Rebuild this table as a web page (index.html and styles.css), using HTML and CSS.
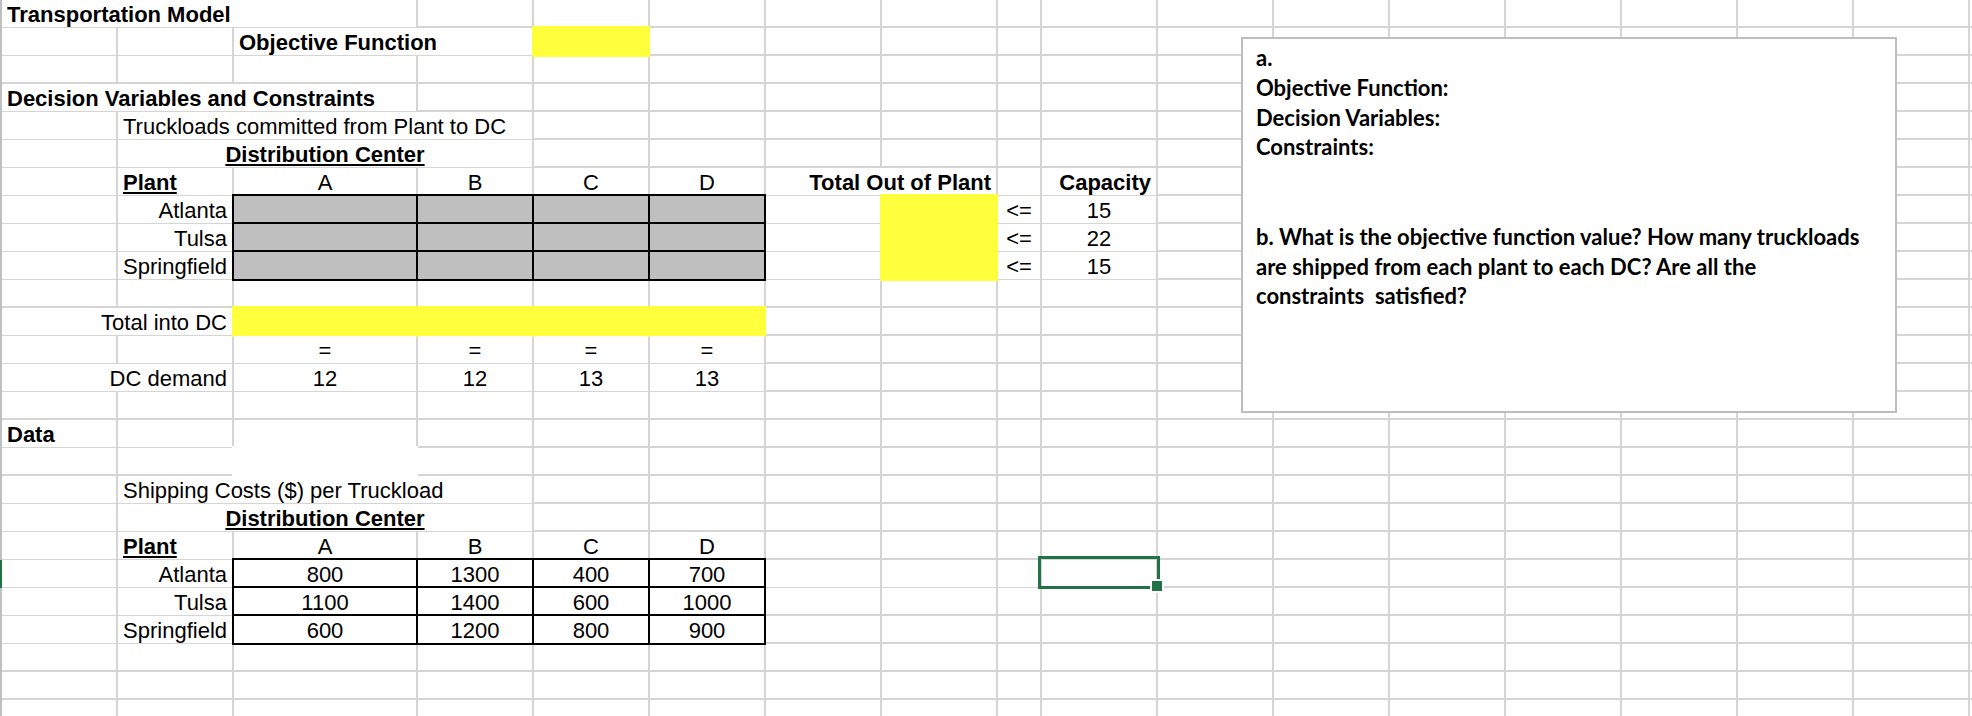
FILE: index.html
```html
<!DOCTYPE html>
<html lang="en">
<head>
<meta charset="utf-8">
<title>Transportation Model</title>
<link rel="stylesheet" href="styles.css">
</head>
<body>
<div class="sheet">
  <div class="row"><span class="s3 b">Transportation Model</span></div>
  <div class="row"><span></span><span></span><span class="s2 b">Objective Function</span><span class="yel"></span></div>
  <div class="row"></div>
  <div class="row"><span class="s3 b">Decision Variables and Constraints</span></div>
  <div class="row"><span></span><span class="s3">Truckloads committed from Plant to DC</span></div>
  <div class="row"><span></span><span class="s3 b c"><u>Distribution Center</u></span></div>
  <div class="row"><span></span><span class="b"><u>Plant</u></span><span class="c">A</span><span class="c">B</span><span class="c">C</span><span class="c">D</span><span class="s2 b r">Total Out of Plant</span><span></span><span class="b r">Capacity</span></div>
  <div class="row"><span></span><span class="r">Atlanta</span><span class="gry"></span><span class="gry"></span><span class="gry"></span><span class="gry"></span><span></span><span class="yel"></span><span class="c">&lt;=</span><span class="c">15</span></div>
  <div class="row"><span></span><span class="r">Tulsa</span><span class="gry"></span><span class="gry"></span><span class="gry"></span><span class="gry"></span><span></span><span class="yel"></span><span class="c">&lt;=</span><span class="c">22</span></div>
  <div class="row"><span></span><span class="r">Springfield</span><span class="gry"></span><span class="gry"></span><span class="gry"></span><span class="gry"></span><span></span><span class="yel"></span><span class="c">&lt;=</span><span class="c">15</span></div>
  <div class="row"></div>
  <div class="row"><span class="s2 r">Total into DC</span><span class="s4 yel"></span></div>
  <div class="row"><span></span><span></span><span class="c">=</span><span class="c">=</span><span class="c">=</span><span class="c">=</span></div>
  <div class="row"><span class="s2 r">DC demand</span><span class="c">12</span><span class="c">12</span><span class="c">13</span><span class="c">13</span></div>
  <div class="row"></div>
  <div class="row"><span class="b">Data</span><span></span><span class="nb"></span></div>
  <div class="row"><span></span><span></span><span class="blank"></span></div>
  <div class="row"><span></span><span class="s3">Shipping Costs ($) per Truckload</span></div>
  <div class="row"><span></span><span class="s3 b c"><u>Distribution Center</u></span></div>
  <div class="row"><span></span><span class="b"><u>Plant</u></span><span class="c">A</span><span class="c">B</span><span class="c">C</span><span class="c">D</span></div>
  <div class="row cur"><span></span><span class="r">Atlanta</span><span class="blk c">800</span><span class="blk c">1300</span><span class="blk c">400</span><span class="blk c">700</span><span></span><span></span><span></span><span class="sel"></span></div>
  <div class="row"><span></span><span class="r">Tulsa</span><span class="blk c">1100</span><span class="blk c">1400</span><span class="blk c">600</span><span class="blk c">1000</span></div>
  <div class="row"><span></span><span class="r">Springfield</span><span class="blk c">600</span><span class="blk c">1200</span><span class="blk c">800</span><span class="blk c">900</span></div>
  <div class="row"></div>
  <div class="row"></div>
  <div class="row"></div>

  <div class="note">
    <p>a.</p>
    <p>Objective Function:</p>
    <p>Decision Variables:</p>
    <p>Constraints:</p>
    <p class="q">b. What is the objective function value? How many truckloads<br>are shipped from each plant to each DC? Are all the<br>constraints&nbsp; satisfied?</p>
  </div>
</div>
</body>
</html>
```

FILE: styles.css
```css
* {
  box-sizing: border-box;
}

html,
body {
  margin: 0;
  padding: 0;
  background: #ffffff;
}

body {
  width: 1972px;
  height: 716px;
  overflow: hidden;
  font-family: "Liberation Sans", Arial, sans-serif;
  font-size: 22px;
  color: #000000;
}

.sheet {
  position: relative;
  width: 1972px;
  height: 716px;
  overflow: hidden;
}

.row {
  display: grid;
  grid-template-columns: 116px 116px 184px 116px 116px 116px 116px 116px 44px 116px 116px 116px 116px 116px 116px 116px 116px 1fr;
  height: 28px;
  border-left: 2px solid #bfbfbf;
  background:
    linear-gradient(#d5d5d5, #d5d5d5) 0 26px / 100% 2px no-repeat,
    linear-gradient(#d5d5d5, #d5d5d5) 114px 0 / 2px 100% no-repeat,
    linear-gradient(#d5d5d5, #d5d5d5) 230px 0 / 2px 100% no-repeat,
    linear-gradient(#d5d5d5, #d5d5d5) 414px 0 / 2px 100% no-repeat,
    linear-gradient(#d5d5d5, #d5d5d5) 530px 0 / 2px 100% no-repeat,
    linear-gradient(#d5d5d5, #d5d5d5) 646px 0 / 2px 100% no-repeat,
    linear-gradient(#d5d5d5, #d5d5d5) 762px 0 / 2px 100% no-repeat,
    linear-gradient(#d5d5d5, #d5d5d5) 878px 0 / 2px 100% no-repeat,
    linear-gradient(#d5d5d5, #d5d5d5) 994px 0 / 2px 100% no-repeat,
    linear-gradient(#d5d5d5, #d5d5d5) 1038px 0 / 2px 100% no-repeat,
    linear-gradient(#d5d5d5, #d5d5d5) 1154px 0 / 2px 100% no-repeat,
    linear-gradient(#d5d5d5, #d5d5d5) 1270px 0 / 2px 100% no-repeat,
    linear-gradient(#d5d5d5, #d5d5d5) 1386px 0 / 2px 100% no-repeat,
    linear-gradient(#d5d5d5, #d5d5d5) 1502px 0 / 2px 100% no-repeat,
    linear-gradient(#d5d5d5, #d5d5d5) 1618px 0 / 2px 100% no-repeat,
    linear-gradient(#d5d5d5, #d5d5d5) 1734px 0 / 2px 100% no-repeat,
    linear-gradient(#d5d5d5, #d5d5d5) 1850px 0 / 2px 100% no-repeat,
    linear-gradient(#d5d5d5, #d5d5d5) 1966px 0 / 2px 100% no-repeat,
    #ffffff;
}

.row.cur {
  border-left-color: #217346;
}

.row > span {
  display: block;
  min-width: 0;
  margin: 0 2px 2px 0;
  padding: 2px 5px 0;
  line-height: 25px;
  white-space: nowrap;
  background: #ffffff;
}

.s2 { grid-column: span 2; }
.s3 { grid-column: span 3; }
.s4 { grid-column: span 4; }

.b { font-weight: 700; }
.r { text-align: right; }
.c { text-align: center; }

.row u {
  text-decoration: underline;
  text-decoration-thickness: 2px;
  text-underline-offset: 2px;
}

.row > .yel {
  margin: 0;
  background: #ffff3b;
  box-shadow: -1px -1px 0 1px #ffff3b;
}

.row > .gry,
.row > .blk {
  margin: 0;
  border-right: 2px solid #000000;
  border-bottom: 2px solid #000000;
  box-shadow: -1px -1px 0 1px #000000;
}

.row > .gry {
  background: #bfbfbf;
}

.row > .blk {
  background: #ffffff;
}

.row > .nb {
  margin-bottom: 0;
}

.row > .blank {
  margin: 0;
  box-shadow: -1px -1px 0 1px #ffffff;
}

.row > .sel {
  position: relative;
}

.sel::before {
  content: "";
  position: absolute;
  left: -4px;
  top: -4px;
  right: -4px;
  bottom: -2px;
  border: 3px solid #217346;
}

.sel::after {
  content: "";
  position: absolute;
  right: -6px;
  bottom: -4px;
  width: 10px;
  height: 10px;
  background: #217346;
  box-shadow: 0 0 0 2px #ffffff;
}

.note {
  position: absolute;
  left: 1241px;
  top: 37px;
  width: 656px;
  height: 376px;
  border: 2px solid #bdbdbd;
  background: #ffffff;
  padding: 4px 13px;
  font-family: Lato, "Liberation Sans", sans-serif;
  font-weight: 700;
  font-size: 22px;
  line-height: 29.8px;
}

.note p {
  margin: 0;
  white-space: nowrap;
}

.note .q {
  margin-top: 59.6px;
}
```
